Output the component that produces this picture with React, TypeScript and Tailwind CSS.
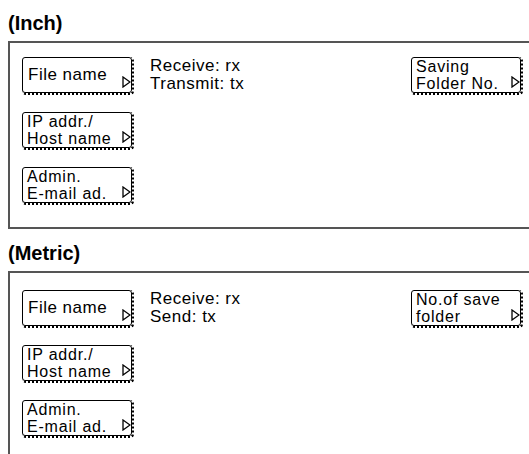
import React from 'react';

type Panel = {
  title: string;
  boxTop: string;
  boxHeight: string;
  padTop: string;
  second: string;
  side: [string, string];
};

const PANELS: Panel[] = [
  { title: '(Inch)', boxTop: 'mt-[12px] mb-[7px]', boxHeight: 'h-[188px]', padTop: 'pt-[14px]', second: 'Transmit: tx', side: ['Saving', 'Folder No.'] },
  { title: '(Metric)', boxTop: 'mt-[13px] mb-[7px]', boxHeight: 'h-[200px]', padTop: 'pt-[17px]', second: 'Send: tx', side: ['No.of save', 'folder'] },
];

// small outlined arrow that sits at the bottom right of every key
function Arrow() {
  return (
    <svg width="9" height="12" viewBox="0 0 9 12" className="absolute right-[0px] bottom-[4px]">
      <polygon points="1,1 8,6 1,11" fill="white" stroke="black" strokeWidth="1.3" />
    </svg>
  );
}

// touch-panel key: thin outline, dotted shadow on right and bottom
function Key({ lines }: { lines: string[] }) {
  const single = lines.length === 1;
  return (
    <div className="w-[112px] h-[38px] rounded-[4px] border-r-2 border-b-2 border-dotted border-black">
      <div className="relative h-full rounded-[3px] border border-black bg-white">
        {single ? (
          <div className="pl-[5px] pt-[7px] text-[17px] leading-[20px] tracking-[0.5px]">{lines[0]}</div>
        ) : (
          <div className="pl-[4px] text-[16px] leading-[17px] tracking-[0.8px]">
            {lines.map((l) => (
              <div key={l}>{l}</div>
            ))}
          </div>
        )}
        <Arrow />
      </div>
    </div>
  );
}

export default function App() {
  return (
    <div className="w-[529px] h-[454px] overflow-hidden bg-white pl-2 text-black" style={{ fontFamily: '"Liberation Sans", Arial, sans-serif' }}>
      {PANELS.map((p) => (
        <div key={p.title}>
          <div className={`${p.boxTop} text-[20px] leading-[22px] font-bold`}>{p.title}</div>
          <div className={`w-[540px] ${p.boxHeight} border-2 border-[#555] pl-[12px] ${p.padTop}`}>
            <div className="flex">
              <div className="flex flex-col gap-[17px]">
                <Key lines={['File name']} />
                <Key lines={['IP addr./', 'Host name']} />
                <Key lines={['Admin.', 'E-mail ad.']} />
              </div>
              <div className="w-[245px] ml-[16px] text-[17px] leading-[18px] tracking-[0.5px]">
                <div>Receive: rx</div>
                <div>{p.second}</div>
              </div>
              <div className="ml-[16px]">
                <Key lines={p.side} />
              </div>
            </div>
          </div>
        </div>
      ))}
    </div>
  );
}
